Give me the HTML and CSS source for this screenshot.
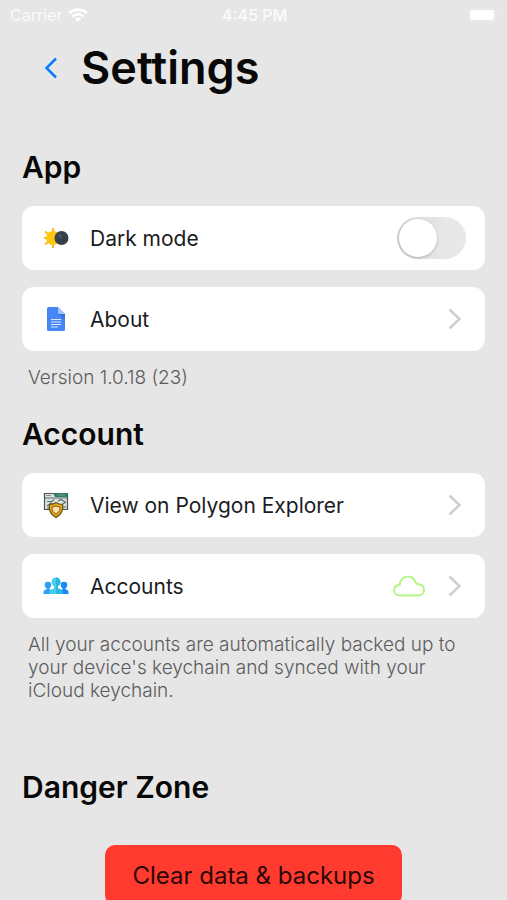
FILE: index.html
```html
<!DOCTYPE html>
<html lang="en">
<head>
<meta charset="utf-8">
<meta name="viewport" content="width=device-width, initial-scale=1">
<title>Settings</title>
<link rel="stylesheet" href="styles.css">
</head>
<body>
<div class="status">
  <span class="carrier">Carrier
    <svg width="20" height="14" viewBox="0 0 20 14" aria-hidden="true"><g fill="none" stroke="#fff" stroke-width="2.6"><path d="M1 5.3C6 .4 14 .4 19 5.3"/><path d="M4.3 8.7c3.200-3.200 8.200-3.200 11.400 0"/></g><path d="M6.900 10.800c1.800-1.600 4.400-1.600 6.200 0L10 14z" fill="#fff"/></svg>
  </span>
  <span class="time">4:45 PM</span>
  <svg class="battery" width="31" height="14" viewBox="0 0 31 14" aria-hidden="true"><rect x=".5" y=".5" width="27" height="13" rx="3" fill="none" stroke="#ececec"/><rect x="2" y="2" width="24" height="10" rx="2" fill="#fff"/><path d="M29 5v4c1.600-.8 1.600-3.200 0-4" fill="#f1f1f1"/></svg>
</div>

<header class="header">
  <a class="back" href="#" aria-label="Back"><svg width="14" height="22" viewBox="0 0 14 22"><path d="M12 1.500 2.500 11 12 20.500" fill="none" stroke="#0a7aff" stroke-width="2.500"/></svg></a>
  <h1>Settings</h1>
</header>

<main>
  <section>
    <h2>App</h2>
    <label class="card" for="dark">
      <svg class="icon" viewBox="0 0 26 26" aria-hidden="true"><g stroke="#fdb92c" stroke-width="2"><path d="M10 3v20M1 13h9M2 6.500l8 6.500M2 19.500l8-6.500"/></g><circle cx="10" cy="13" r="7" fill="#fec60c"/><circle cx="18.500" cy="13" r="7" fill="#35424a"/><circle cx="17" cy="11" r="2" fill="#46545c"/><circle cx="21" cy="15" r="1.500" fill="#27343b"/></svg>
      <span class="name">Dark mode</span>
      <input class="switch" id="dark" type="checkbox" role="switch">
    </label>
    <a class="card" href="#">
      <svg class="icon" viewBox="0 0 26 26" aria-hidden="true"><path d="M6 1h9l7 7v15.500q0 1.500-1.500 1.500h-15Q4 25 4 23.500V2.500Q4 1 5.500 1z" fill="#4787f3"/><path d="M15 1l7 7h-5.500Q15 8 15 6.500z" fill="#a4c5f8"/><path d="M15.500 8H22v6z" fill="#3b72d4"/><path d="M8 13.500h10M8 16h10M8 18.500h10M8 21h7" stroke="#d9e6fd" stroke-width="1.200"/></svg>
      <span class="name">About</span>
      <svg class="chevron" viewBox="0 0 14 22" aria-hidden="true"><path d="M1.500 1.500 11.500 11 1.500 20.500"/></svg>
    </a>
    <p class="note">Version 1.0.18 (23)</p>
  </section>

  <section>
    <h2>Account</h2>
    <a class="card" href="#">
      <svg class="icon" viewBox="0 0 26 26" aria-hidden="true"><path d="M1.500 1.500h23v16h-23z" fill="#dce4e3" stroke="#4b5354" stroke-width="1.200"/><path d="M10 1h15v4H12z" fill="#2c8068"/><path d="M3 3.500h5M14 3h8" stroke="#7c9590"/><path d="M2 6h22M4 9.500h5l2-2M4 14l4-3 3 2M15 9l3-1.500 5 3M18 13l5-3M4 16h4M20 15h3" fill="none" stroke="#5b6768" stroke-width="1.100"/><path d="M13 10.500c2 1.600 4 2 6.500 2 1 6-1 10-6.500 13C7.500 22.500 5.500 18.500 6.500 12.500c2.500 0 4.500-.4 6.500-2z" fill="#e4ad18" stroke="#655018" stroke-width="1.200"/><path d="M13 14l4 1.300c.3 3.500-1 5.300-4 6.700-3-1.400-4.300-3.200-4-6.700z" fill="#ffe0af" stroke="#99701a" stroke-width="1.200"/></svg>
      <span class="name">View on Polygon Explorer</span>
      <svg class="chevron" viewBox="0 0 14 22" aria-hidden="true"><path d="M1.500 1.500 11.500 11 1.500 20.500"/></svg>
    </a>
    <a class="card" href="#">
      <svg class="icon" viewBox="0 0 26 26" aria-hidden="true"><g fill="#2d9ff5"><circle cx="5" cy="12" r="3.300"/><path d="M.5 21v-2q0-2 3-2.500V14h3v2.500q3 .5 3 2.500v2z"/></g><g fill="#1688f7"><circle cx="21" cy="12" r="3.300"/><path d="M16.500 21v-2q0-2 3-2.500V14h3v2.500q3 .5 3 2.500v2z"/></g><circle cx="13" cy="9" r="4.500" fill="#48cdec"/><path d="M6.500 21v-2q0-2.500 4.500-3.500V12h4v3.500q4.500 1 4.500 3.500v2z" fill="#48cdec"/><path d="M13 4.500a4.500 4.500 0 0 1 2 8.500v2.500q4.500 1 4.500 3.500v2H13z" fill="#29b8e6"/></svg>
      <span class="name">Accounts</span>
      <svg class="cloud" width="32" height="22" viewBox="0 0 32 22" aria-hidden="true"><path d="M7 20.500h18c3.300 0 6-2.100 6-5.500 0-3.200-2.200-5.500-5.500-5.800-1.300-.2-2.500-.8-3.200-2C21 3.500 18.500 1.500 15 1.500c-4.600 0-8 3.300-8.200 8C3.500 10.200 1 12.200 1 15.200c0 3.200 2.600 5.300 6 5.300z" fill="none" stroke="#b4f585" stroke-width="2"/></svg>
      <svg class="chevron" viewBox="0 0 14 22" aria-hidden="true"><path d="M1.500 1.500 11.500 11 1.500 20.500"/></svg>
    </a>
    <p class="note">All your accounts are automatically backed up to your device's keychain and synced with your iCloud keychain.</p>
  </section>

  <section class="danger">
    <h2>Danger Zone</h2>
    <button class="clear" type="button">Clear data &amp; backups</button>
  </section>
</main>
</body>
</html>
```

FILE: styles.css
```css
* { box-sizing: border-box; }

body {
  margin: 0;
  background: #e6e6e6;
  color: #080808;
  font-family: Inter, "Liberation Sans", sans-serif;
}

h1, h2, p { margin: 0; }
a { color: inherit; text-decoration: none; }
svg { display: block; flex: none; }

.status {
  display: grid;
  grid-template-columns: 1fr auto 1fr;
  align-items: center;
  height: 30px;
  padding: 0 8px 0 10px;
  color: #fafafa;
  font-size: 16px;
}
.carrier { display: flex; align-items: center; gap: 6px; }
.time { font-weight: 600; }
.battery { justify-self: end; }

.header {
  display: flex;
  align-items: center;
  gap: 23px;
  height: 76px;
  padding-left: 44px;
}
h1 { font-size: 45px; line-height: 52px; font-weight: 600; }

main { padding: 41px 22px 0; }

h2 {
  margin-bottom: 19px;
  font-size: 30px;
  line-height: 40px;
  font-weight: 600;
}

.card {
  display: flex;
  align-items: center;
  height: 64px;
  margin-bottom: 17px;
  padding: 0 19px 0 21px;
  border-radius: 12px;
  background: #fff;
  color: #1c1c1e;
  font-size: 21px;
}
.icon { width: 26px; height: 26px; }
.name { flex: 1; margin-left: 21px; }

.chevron {
  width: 14px;
  height: 22px;
  margin-right: 4px;
  fill: none;
  stroke: #cfcfd0;
  stroke-width: 2.5;
}
.cloud { margin-right: 23px; }

.switch {
  appearance: none;
  width: 69px;
  height: 42px;
  margin: 0;
  padding: 2px;
  border-radius: 21px;
  background: linear-gradient(90deg, #d6d6d6, #e8e8e8 70%);
}
.switch::before {
  content: "";
  display: block;
  width: 38px;
  height: 38px;
  border-radius: 50%;
  background: #fff;
  box-shadow: 0 1px 3px #0003;
}
.switch:checked { background: #34c759; }
.switch:checked::before { margin-left: auto; }

.note {
  margin-bottom: 25px;
  padding: 0 6px;
  color: #5c5c5e;
  font-size: 19px;
  font-weight: 300;
  line-height: 23px;
}
.card + .note { margin-top: -2px; }

.danger { padding-top: 40px; }
.danger h2 { margin-bottom: 38px; }
.clear {
  display: block;
  height: 60px;
  margin: 0 auto;
  padding: 0 27px;
  border: 0;
  border-radius: 10px;
  background: #ff3b30;
  color: #2b0805;
  font-family: inherit;
  font-size: 24px;
}
```
